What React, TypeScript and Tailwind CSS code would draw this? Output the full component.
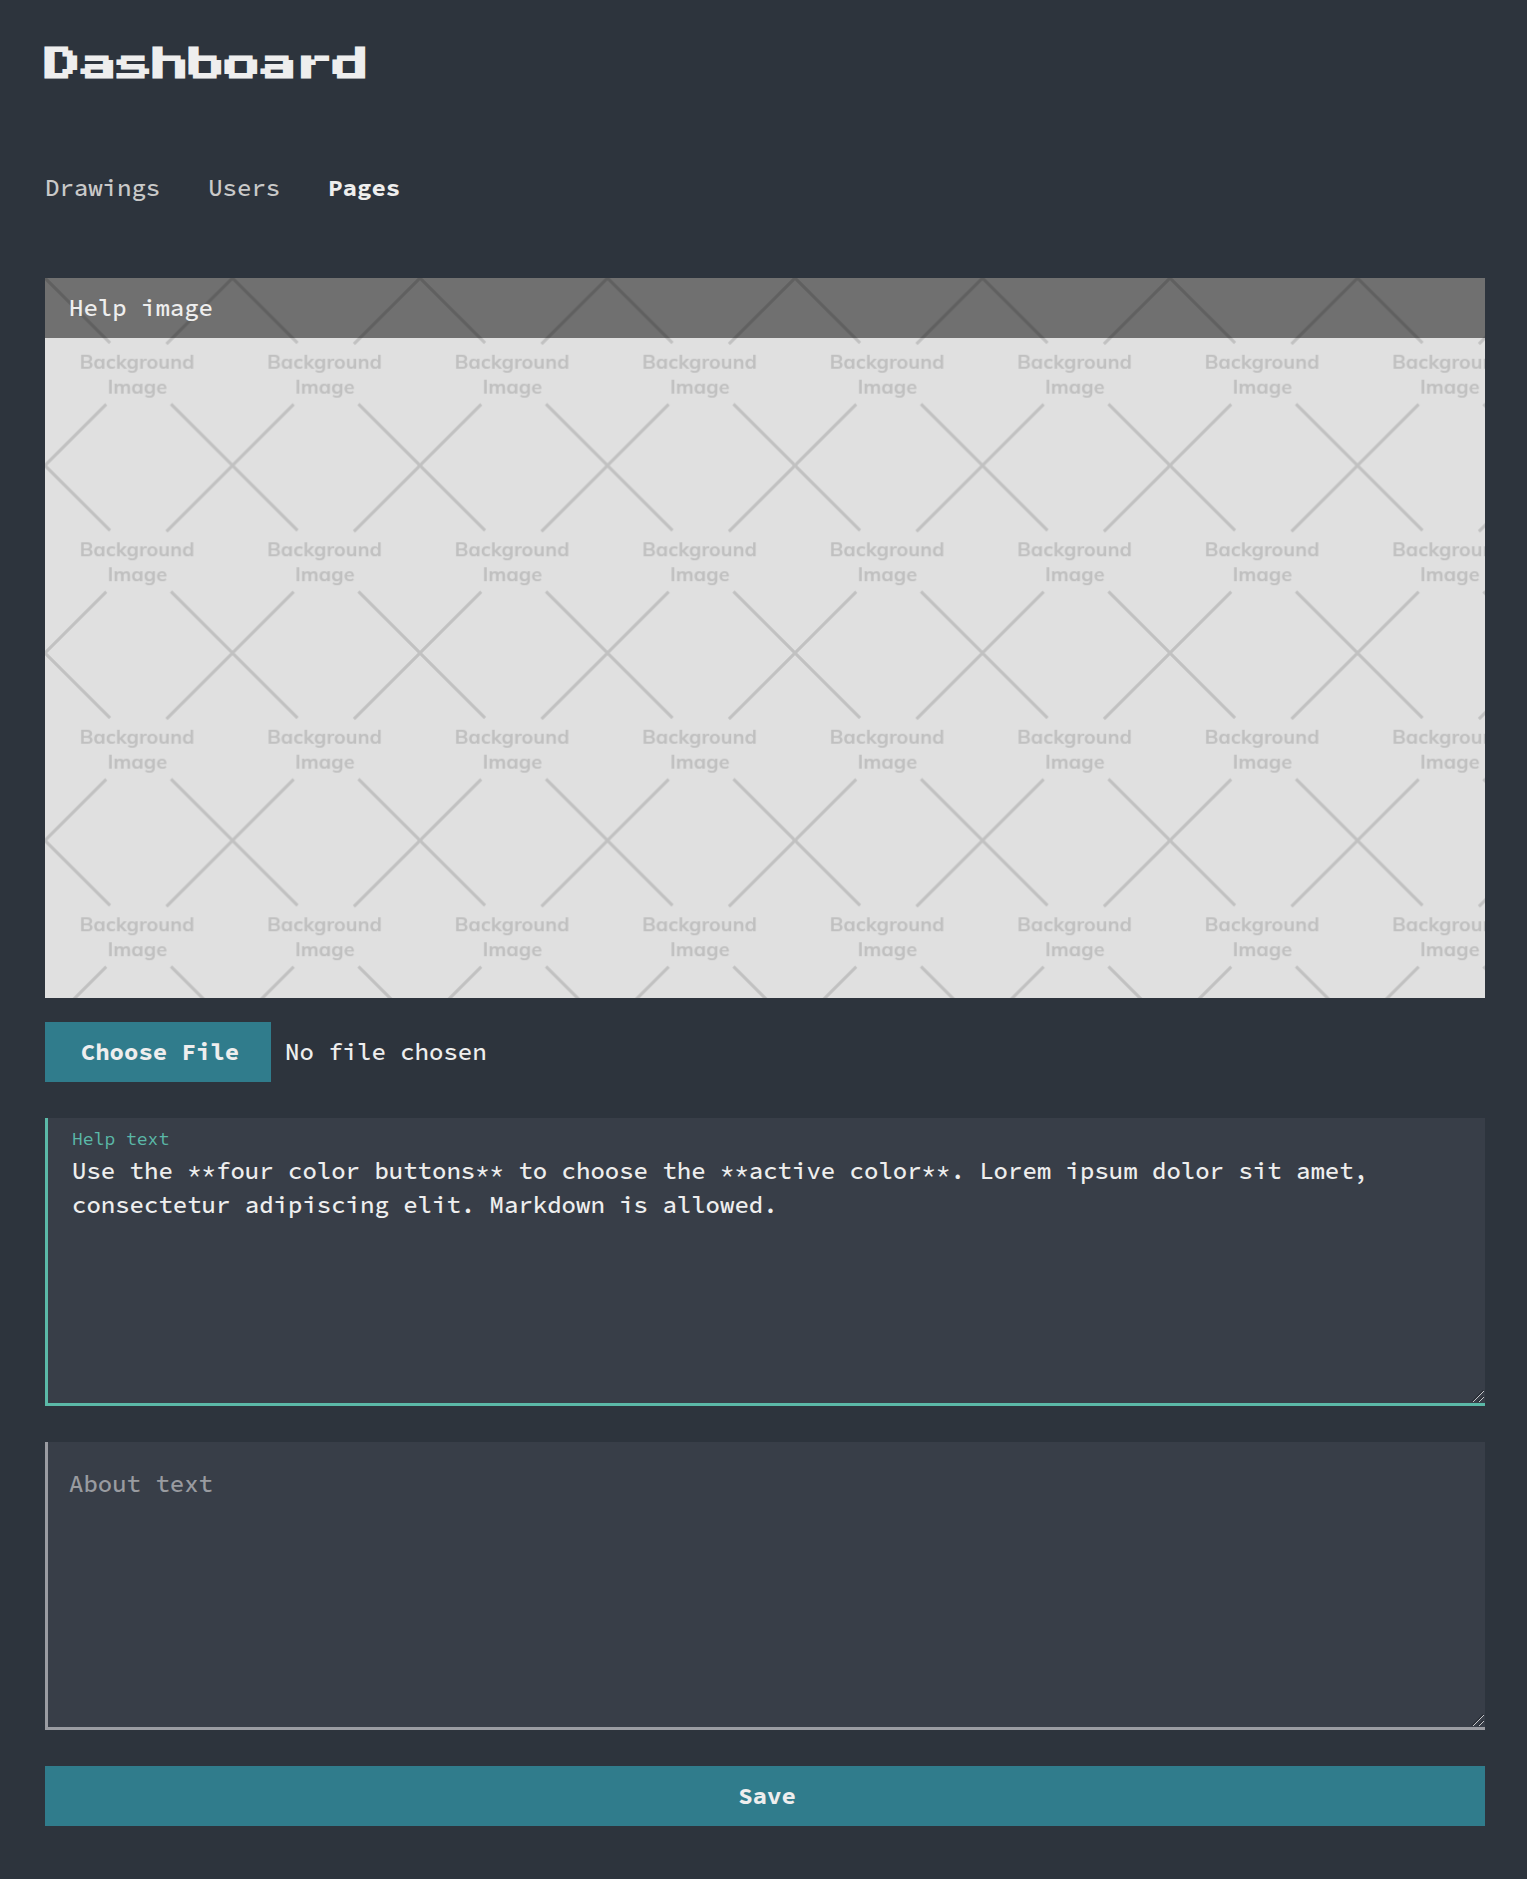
import React from 'react';

const mono = "font-['Source_Code_Pro','Liberation_Mono',monospace]";

function Placeholder() {
  return (
    <svg className="block h-full w-full" aria-label="Background Image">
      <defs>
        <pattern id="tile" width="187.5" height="187.5" patternUnits="userSpaceOnUse">
          <rect width="187.5" height="187.5" fill="#e0e0e0" />
          <path
            d="M-2 -2L65 65M189.5 -2L121.5 66M61.2 126.3L-2 189.5M126 126L189.5 189.5"
            fill="none"
            stroke="#c1c1c1"
            strokeWidth="3"
          />
          <g fill="#c0c0c0" fontFamily="Mulish, Lato, sans-serif" fontWeight="660" fontSize="20">
            <text x="34.7" y="90.5" textLength="114.8" lengthAdjust="spacingAndGlyphs">Background</text>
            <text x="62.6" y="115.7" textLength="59.5" lengthAdjust="spacingAndGlyphs">Image</text>
          </g>
        </pattern>
      </defs>
      <rect width="100%" height="100%" fill="url(#tile)" />
    </svg>
  );
}

function ResizeGrip() {
  return (
    <svg
      className="pointer-events-none absolute right-0 bottom-[3px]"
      width="14"
      height="14"
      viewBox="0 0 14 14"
      fill="none"
    >
      <path d="M1 12.5L12.5 1M7 12.5L12.5 7" stroke="#20242b" strokeWidth="1" />
      <path d="M2 13L13 2M8 13L13 8" stroke="#c4c6c9" strokeWidth="1" />
    </svg>
  );
}

export default function App() {
  return (
    <div className={`${mono} min-h-[1879px] bg-[#2d343d] pl-[45px] pr-[42px] text-2xl font-medium text-[#eeeeee]`}>
      <header className="h-[172px] pt-[38px]">
        <h1 className="font-['Press_Start_2P','DejaVu_Sans_Mono',monospace] text-4xl leading-[54px] font-bold">
          Dashboard
        </h1>
      </header>
      <nav className="flex h-[106px] gap-12 leading-8 text-[#c9c9c9]">
        <a>Drawings</a>
        <a>Users</a>
        <a className="font-bold text-[#eeeeee]">Pages</a>
      </nav>
      <main className="flex w-[1440px] flex-col">
        <section className="relative h-[720px] overflow-hidden">
          <Placeholder />
          <div className="absolute inset-x-0 top-0 flex h-[60px] items-center bg-black/50 pl-6">Help image</div>
        </section>
        <div className="mt-6 flex h-[60px] items-center">
          <button className="h-[60px] w-[226px] bg-[#307c8c] pl-1 font-bold">Choose File</button>
          <span className="ml-[14px]">No file chosen</span>
        </div>
        <div className="relative mt-9 h-[288px]">
          <label className="absolute top-[9px] left-[27px] text-lg leading-6 font-normal text-[#5bb9a8]">
            Help text
          </label>
          <textarea
            spellCheck={false}
            className="block h-[288px] w-full resize-none border-b-[3px] border-l-[3px] border-[#5bb9a8] bg-[#383e48] pt-9 pr-6 pl-6 leading-[34px] outline-none"
            defaultValue="Use the **four color buttons** to choose the **active color**. Lorem ipsum dolor sit amet, consectetur adipiscing elit. Markdown is allowed."
          />
          <ResizeGrip />
        </div>
        <div className="relative mt-9 h-[288px]">
          <textarea
            placeholder="About text"
            className="block h-[288px] w-full resize-none border-b-[3px] border-l-[3px] border-[#9a9ca2] bg-[#383e48] pt-[25px] pl-[21px] leading-[34px] outline-none placeholder:text-[#999ba0]"
          />
          <ResizeGrip />
        </div>
        <button className="mt-9 h-[60px] w-full bg-[#307c8c] pl-1 font-bold">Save</button>
      </main>
    </div>
  );
}
